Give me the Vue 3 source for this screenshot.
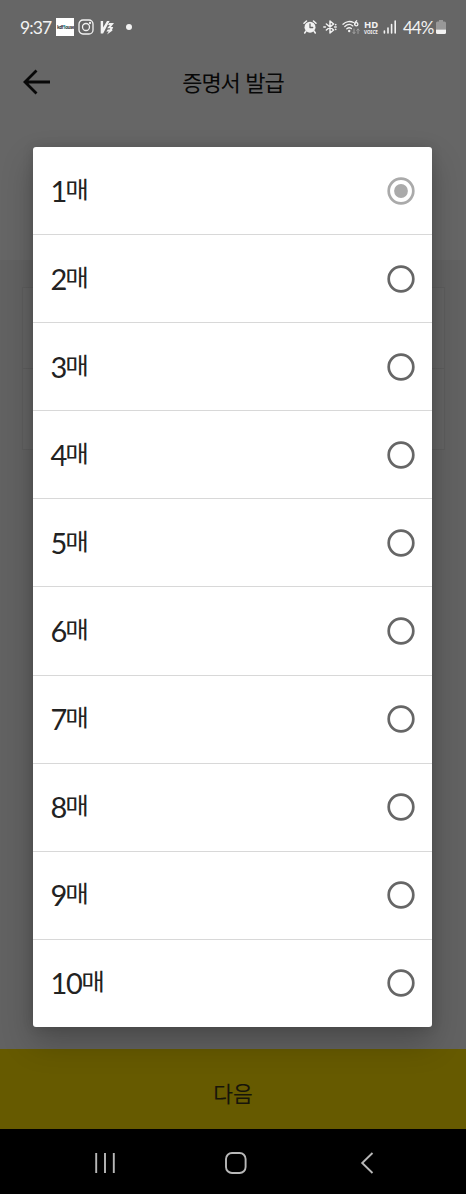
<script setup>
import { ref } from 'vue';

const counts = [1, 2, 3, 4, 5, 6, 7, 8, 9, 10];
const selected = ref(1);
</script>

<template>
  <div class="screen">
    <header class="status">
      <span class="status__time">9:37</span>
      <span class="status__app"><span>kdf<b>1</b>ouse</span></span>
      <svg class="status__insta" viewBox="0 0 16 16">
        <rect x="1" y="1" width="14" height="14" rx="4" />
        <circle cx="8" cy="8" r="3.5" />
        <circle cx="12" cy="4" r=".5" />
      </svg>
      <svg class="status__vaccine" viewBox="0 0 14 15">
        <path d="M.7 1h2.4v6.5L7 1h2.6L3.1 13.5H.7z" />
        <path d="M9.2 3H14l-3.1 4h2.3l-1.3 3.2h1L7 14.6l1.8-3.2H6.4l1.3-1.9h2l.6-1.2H7.2l2.7-3.4H8z" />
      </svg>
      <span class="status__dot" />

      <div class="status__right">
        <svg class="status__alarm" viewBox="0 0 14 14">
          <path class="line" d="M1 3.3L3.5 1M13 3.3L10.5 1M3 11l-1.3 2M11 11l1.3 2" />
          <circle cx="7" cy="7.2" r="5.5" />
          <path class="hand" d="M7 4v3.5h2.7" />
        </svg>
        <svg class="status__bluetooth" viewBox="0 0 14 14">
          <path d="M3.4 4l7.2 6L7 13V1l3.6 3-7.2 6" />
          <path d="M.8 7h1.6M11.6 7h1.6M12.6 4.8l.2-.2M12.6 9.3l.2.2" />
        </svg>
        <svg class="status__wifi" viewBox="0 0 18 15">
          <path d="M1 4.2C4 1.2 8.5.8 11.5 2.5M2.8 6.5c2.5-2.3 5.8-2.5 8-.6M4.8 8.8c1.6-1.4 3.2-1.4 4.6-.2" />
          <circle class="base" cx="7.2" cy="11" r="1.2" />
          <path d="M14.7.8C13 2 12.6 3.2 12.6 4.4" />
          <circle cx="14.3" cy="4.3" r="1.6" />
          <path class="traffic" d="M12 9v4.5M10.8 12.2l1.2 1.4 1.2-1.4M16 13.5V9M14.8 10.3L16 9l1.2 1.3" />
        </svg>
        <span class="status__hd"><b>HD</b><small>VOICE</small></span>
        <svg class="status__signal" viewBox="0 0 14 14">
          <path d="M1.4 11v2M5 8v5M8.6 4.5V13M12.2 1v12" />
        </svg>
        <span class="status__percent">44%</span>
        <svg class="status__battery" viewBox="0 0 10 14">
          <path class="shell" d="M3 0h4v1.5h1.5Q10 1.5 10 3v6.5H0V3q0-1.5 1.5-1.5H3z" />
          <path d="M0 9.5h10v3q0 1.5-1.5 1.5h-7Q0 14 0 12.5z" />
        </svg>
      </div>
    </header>

    <div class="title-bar">
      <svg class="title-bar__back" viewBox="0 0 28 26">
        <path d="M27 13H2M13.5 1.5L2 13l11.5 11.5" />
      </svg>
      <h1>증명서 발급</h1>
    </div>

    <main class="page">
      <div class="page__panel">
        <div class="page__field" />
        <div class="page__field" />
      </div>
    </main>

    <button class="next">다음</button>

    <nav class="nav">
      <svg viewBox="0 0 24 24"><path d="M3.2 2v20M12 2v20M20.8 2v20" /></svg>
      <svg viewBox="0 0 24 24"><rect x="2" y="2" width="19.6" height="20" rx="6" /></svg>
      <svg viewBox="0 0 24 24"><path d="M17.5 2L7.2 12l10.3 10" /></svg>
    </nav>

    <ul class="picker">
      <li
        v-for="count in counts"
        :key="count"
        class="picker__item"
        @click="selected = count"
      >
        <span class="picker__label">
          <span class="picker__count">{{ count }}</span><span class="picker__unit">매</span>
        </span>
        <svg
          class="picker__radio"
          :class="{ 'picker__radio--on': selected === count }"
          viewBox="0 0 28 28"
        >
          <circle cx="14" cy="14" r="12.3" />
          <circle v-if="selected === count" class="dot" cx="14" cy="14" r="6.9" />
        </svg>
      </li>
    </ul>
  </div>
</template>

<style>
body {
  margin: 0;
  background: #666666;
}
</style>

<style scoped>
.screen {
  position: relative;
  display: flex;
  flex-direction: column;
  width: 466px;
  height: 1194px;
  overflow: hidden;
  background: #666666;
  font-family: "Noto Sans", "Noto Sans CJK KR", sans-serif;
}

svg {
  flex: none;
  fill: none;
  stroke-linecap: round;
  stroke-linejoin: round;
}

.status {
  display: flex;
  align-items: center;
  box-sizing: border-box;
  height: 54px;
  padding: 0 20px;
  color: #f2f2f2;
  stroke: #f2f2f2;
}

.status__time {
  width: 36px;
  font-family: Lato, sans-serif;
  font-size: 17.5px;
  letter-spacing: -0.9px;
  white-space: nowrap;
}

.status__app {
  display: flex;
  align-items: center;
  justify-content: center;
  width: 18px;
  height: 18px;
  overflow: hidden;
  background: #ffffff;
  color: #333333;
  font-size: 5px;
  font-weight: bold;
  letter-spacing: -0.5px;
}

.status__app span {
  transform: scaleX(0.9);
}

.status__app b {
  color: #168ba0;
}

.status__insta {
  width: 16px;
  height: 16px;
  margin-left: 4px;
  stroke-width: 1.3;
}

.status__vaccine {
  width: 14px;
  height: 15px;
  margin-left: 6px;
  fill: #f2f2f2;
  stroke: none;
}

.status__dot {
  width: 6px;
  height: 6px;
  margin-left: 12px;
  border-radius: 50%;
  background: #f2f2f2;
}

.status__right {
  display: flex;
  align-items: center;
  margin-left: auto;
}

.status__alarm {
  width: 14px;
  height: 14px;
  fill: #f2f2f2;
  stroke: none;
}

.status__alarm .line {
  stroke: #f2f2f2;
  stroke-width: 1.5;
}

.status__alarm .hand {
  fill: none;
  stroke: #666666;
  stroke-width: 1.3;
}

.status__bluetooth {
  width: 14px;
  height: 14px;
  margin-left: 5.5px;
  stroke-width: 1.5;
}

.status__wifi {
  width: 18px;
  height: 15px;
  margin-left: 5.5px;
  stroke-width: 1.3;
}

.status__wifi .base {
  fill: #f2f2f2;
  stroke: none;
}

.status__wifi .traffic {
  stroke: #a0a0a0;
  stroke-width: 1;
}

.status__hd {
  display: flex;
  flex-direction: column;
  align-items: center;
  width: 16px;
  margin-left: 3px;
}

.status__hd b {
  font-size: 9.5px;
  line-height: 9px;
}

.status__hd small {
  font-size: 4.6px;
  font-weight: bold;
  line-height: 6px;
}

.status__signal {
  width: 14px;
  height: 14px;
  margin-left: 4px;
  stroke-width: 1.6;
}

.status__percent {
  width: 31px;
  margin-left: 6px;
  font-family: Lato, sans-serif;
  font-size: 17px;
  letter-spacing: -1px;
}

.status__battery {
  width: 10px;
  height: 14px;
  margin-left: 2px;
  fill: #f2f2f2;
  stroke: none;
}

.status__battery .shell {
  fill: #989898;
}

.title-bar {
  display: grid;
  grid-template-columns: 28px 1fr 28px;
  align-items: center;
  height: 56px;
  padding: 0 23px;
  color: #080808;
}

.title-bar__back {
  width: 28px;
  height: 26px;
  stroke: #080808;
  stroke-width: 2.8;
  stroke-linecap: butt;
  stroke-linejoin: miter;
}

.title-bar h1 {
  margin: 0;
  padding-bottom: 2px;
  font-size: 22px;
  font-weight: 400;
  letter-spacing: -1.1px;
  word-spacing: 1px;
  text-align: center;
}

.page {
  flex: 1;
  margin-top: 150px;
  padding: 27px 21px 0 22px;
  background: #626262;
}

.page__panel {
  border: 1px solid #5d5d5d;
  background: #646464;
}

.page__field {
  height: 80px;
}

.page__field + .page__field {
  border-top: 1px solid #5d5d5d;
}

.next {
  height: 80px;
  padding: 7px 0 0;
  border: 0;
  background: #665a00;
  color: #17150a;
  font-family: "Noto Sans CJK KR", sans-serif;
  font-size: 21.5px;
}

.nav {
  display: flex;
  justify-content: space-between;
  align-items: center;
  box-sizing: border-box;
  height: 65px;
  padding: 3px 87px 0 93px;
  background: #000000;
}

.nav svg {
  width: 24px;
  height: 24px;
  stroke: #b8b8b8;
  stroke-width: 1.9;
  stroke-linecap: butt;
  stroke-linejoin: miter;
}

.picker {
  position: absolute;
  top: 147px;
  left: 33.4px;
  display: grid;
  grid-template-rows: 87px repeat(9, 1fr);
  width: 398.6px;
  height: 880px;
  margin: 0;
  padding: 0;
  border-radius: 3px;
  background: #ffffff;
  box-shadow: 0 15px 32px rgba(0, 0, 0, 0.24), 0 0 12px rgba(0, 0, 0, 0.12);
  list-style: none;
}

.picker__item {
  display: flex;
  justify-content: space-between;
  align-items: center;
  padding: 0 17px;
}

.picker__item + .picker__item {
  border-top: 1px solid #d8d8d8;
}

.picker__label {
  display: flex;
  align-items: center;
  color: #222222;
}

.picker__count {
  font-family: Lato, sans-serif;
  font-size: 29px;
  line-height: 40px;
  letter-spacing: -1.2px;
}

.picker__unit {
  padding-bottom: 4px;
  font-family: "Noto Sans CJK KR", sans-serif;
  font-size: 24px;
  line-height: 36px;
  transform: scale(1.07, 0.93);
}

.picker__radio {
  width: 28px;
  height: 28px;
  stroke: #666666;
  stroke-width: 2.7;
}

.picker__radio--on {
  stroke: #aaaaaa;
}

.picker__radio .dot {
  fill: #aaaaaa;
  stroke: none;
}
</style>
